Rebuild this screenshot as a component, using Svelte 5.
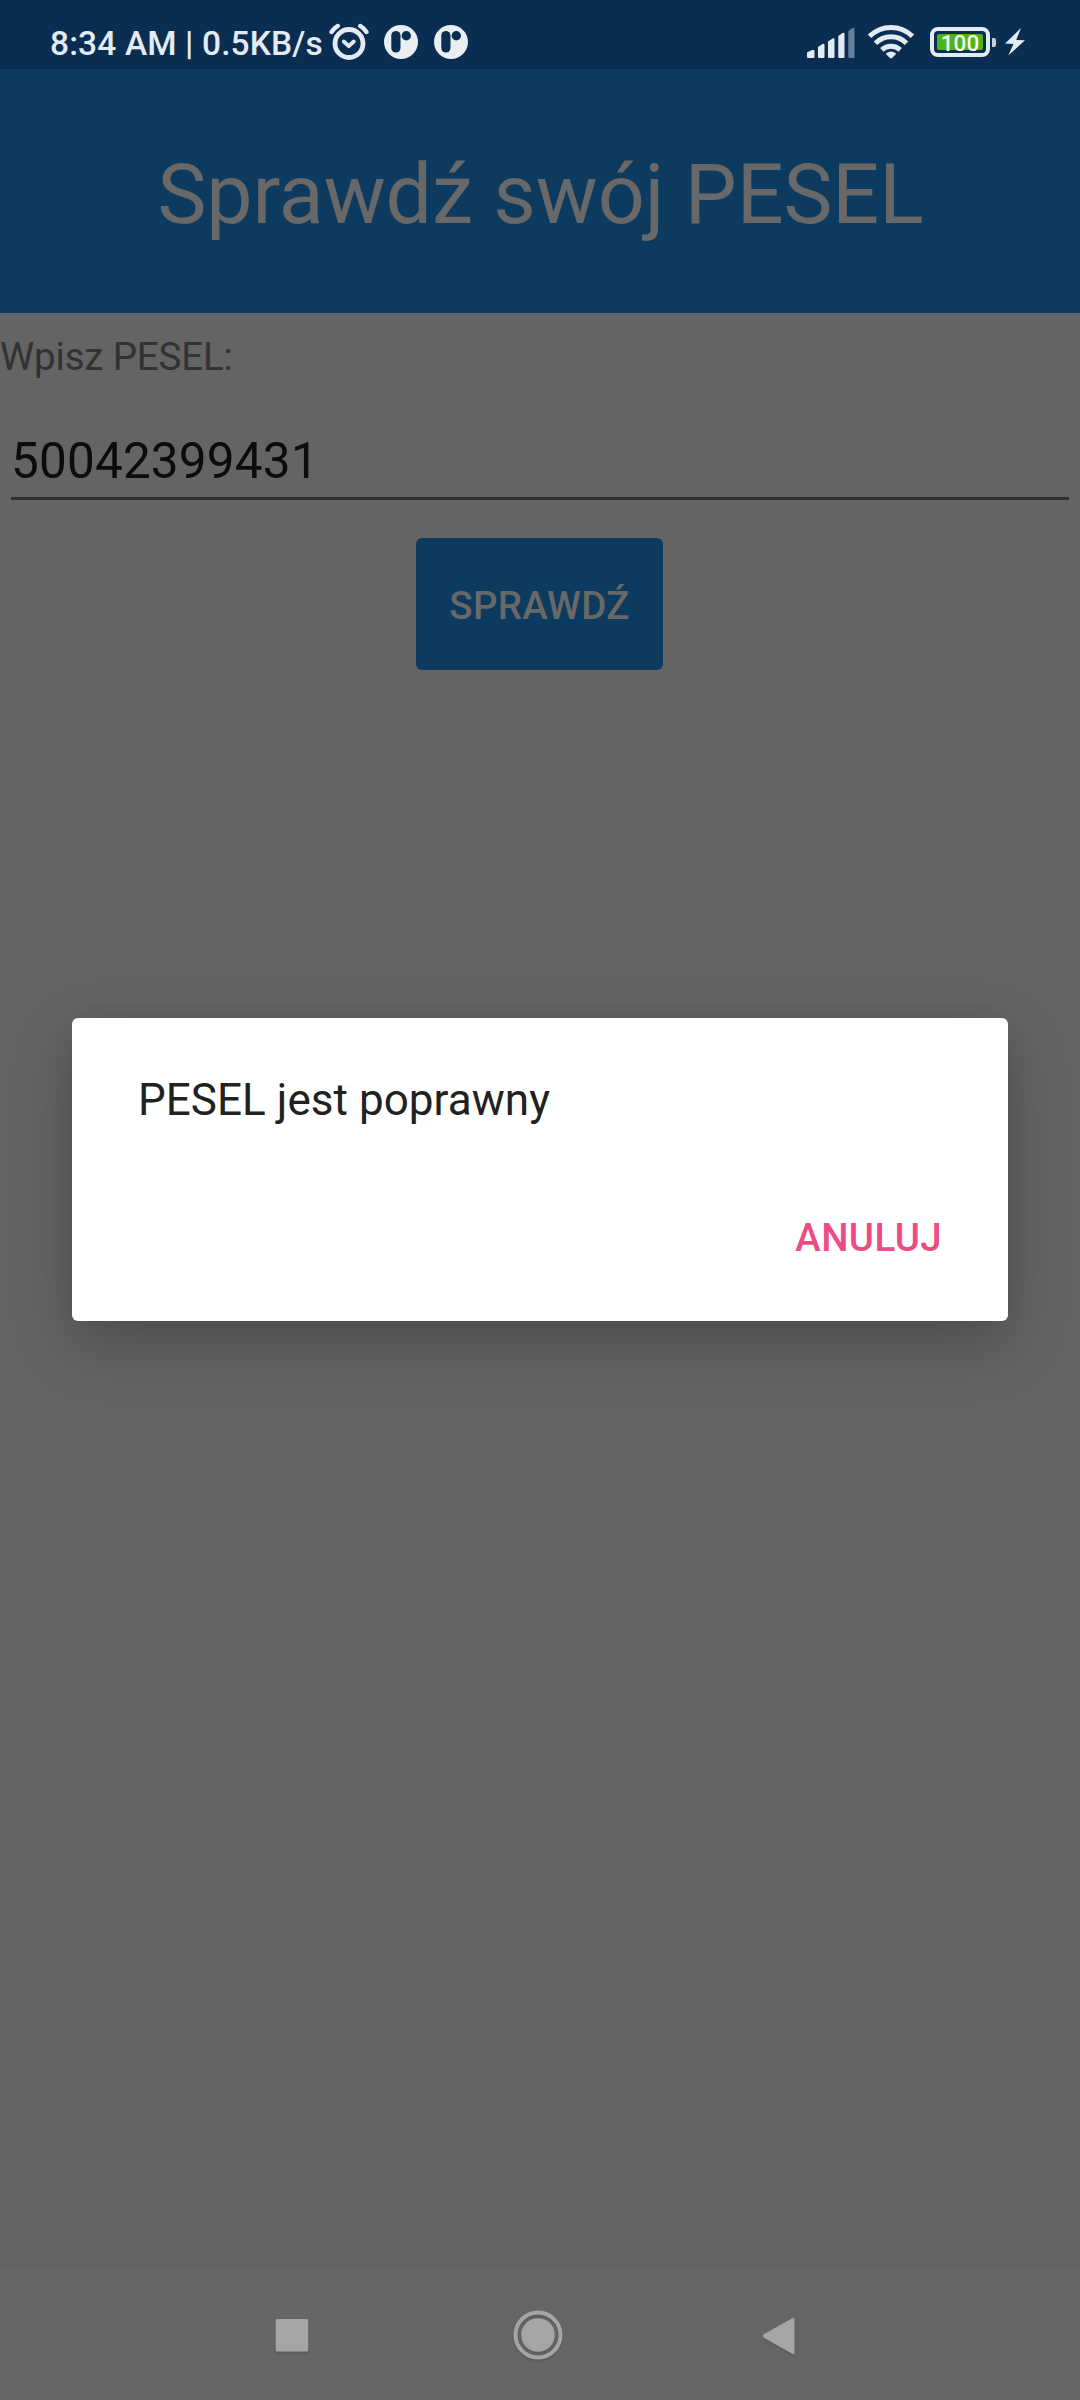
<script>
  let pesel = $state('50042399431');
  let open = $state(true);
</script>

<div class="screen">
  <header class="status">
    <span class="clock">8:34 AM | 0.5KB/s</span>
    <svg class="alarm" width="40" height="40" viewBox="0 0 40 40" fill="none" stroke="#e4ebf3" stroke-linecap="round" stroke-linejoin="round">
      <circle cx="20" cy="21.5" r="14" stroke-width="4.8" />
      <path d="M14.8 19.5l5 4.700 5-4.700" stroke-width="3.800" />
      <path d="M2.500 10Q5 6.200 8.800 3.900M37.500 10Q35 6.200 31.200 3.900" stroke-width="4.300" />
    </svg>
    {#each [0, 1] as n (n)}
      <svg class="app" width="34" height="34" viewBox="0 0 34 34">
        <circle cx="17" cy="17" r="17" fill="#e9eef3" />
        <rect x="7.300" y="6" width="9.200" height="21.5" rx="4.600" fill="#0a2d52" />
        <circle cx="22.300" cy="10.800" r="4.700" fill="#0a2d52" />
      </svg>
    {/each}
    <svg class="signal" width="48" height="32" viewBox="0 0 48 32" fill="#e4ebf3">
      <path d="M0 26.500 5 24h1.500q1 0 1 1v6q0 1-1 1H1q-1 0-1-1z" />
      <path d="M11 21l4.500-3q2-.8 2 1v12q0 1-1 1H12q-1 0-1-1z" />
      <path d="M21 15.500l4.500-3q2-.8 2 1V31q0 1-1 1H22q-1 0-1-1z" />
      <path d="M31.300 10l4.200-3q2-.8 2 1v23q0 1-1 1h-4.200q-1 0-1-1z" />
      <path d="M41.300 5l4.200-3q2-.8 2 1v28q0 1-1 1h-4.200q-1 0-1-1z" fill="#667f9a" />
    </svg>
    <svg class="wifi" width="48" height="36" viewBox="0 0 48 36" fill="none" stroke="#e4ebf3" stroke-width="5">
      <path d="M2.500 12.300a30.500 30.500 0 0 1 43 0" />
      <path d="M8.500 19.200a22 22 0 0 1 31 0" />
      <path d="M14.800 25.900a13.600 13.600 0 0 1 18.400 0" />
      <path d="M23 34l-3.600-3.400q-.8-.8.200-1.500 4.400-3 8.800 0 1 .7.200 1.500L25 34q-1 .9-2 0z" fill="#e4ebf3" stroke="none" />
    </svg>
    <div class="battery"><span class="level">100</span></div>
    <span class="nub"></span>
    <svg class="bolt" width="20" height="28" viewBox="0 0 20 28" fill="#e4ebf3">
      <path d="M16 0 0 15.500l8.500.5L3.300 27.600 20 12.200l-8.800-.3z" />
    </svg>
  </header>

  <h1>Sprawdź swój PESEL</h1>

  <main>
    <label for="pesel">Wpisz PESEL:</label>
    <input id="pesel" bind:value={pesel} />
    <button class="check" onclick={() => (open = true)}>SPRAWDŹ</button>
  </main>

  <nav>
    <svg width="36" height="36" viewBox="0 0 36 36"><rect x="1.700" y="1" width="32.500" height="32.500" rx="1.500" /></svg>
    <svg class="home" width="50" height="50" viewBox="0 0 50 50">
      <circle cx="25" cy="25" r="22.500" fill="none" stroke="#a5a5a5" stroke-width="4" />
      <circle cx="25" cy="25" r="16.800" />
    </svg>
    <svg width="34" height="40" viewBox="0 0 34 40"><path d="M1.400 18.600Q0 20 1.400 21.400L30.500 38q2 1 2-1V3q0-2-2-1z" /></svg>
  </nav>

  {#if open}
    <div class="dialog" role="dialog">
      <p>PESEL jest poprawny</p>
      <button class="cancel" onclick={() => (open = false)}>ANULUJ</button>
    </div>
  {/if}
</div>

<style>
  :global(body) {
    margin: 0;
    background: #646464;
  }
  .screen {
    position: relative;
    display: flex;
    flex-direction: column;
    width: 1080px;
    height: 2400px;
    background: #646464;
    font-family: Roboto, sans-serif;
    overflow: hidden;
  }
  .screen * {
    box-sizing: border-box;
  }
  svg {
    display: block;
    flex: none;
  }
  .status {
    display: flex;
    align-items: center;
    height: 69px;
    padding: 15px 55px 0 50px;
    background: #0a2d52;
  }
  .clock {
    width: 279px;
    margin-top: 4px;
    color: #e4ebf3;
    font-size: 33.500px;
    font-weight: 500;
    letter-spacing: 0.120px;
    line-height: 56px;
    white-space: nowrap;
  }
  .alarm {
    margin-right: 15px;
  }
  .app {
    margin-right: 16px;
  }
  .signal {
    margin: 0 12px 0 auto;
  }
  .wifi {
    margin-right: 15px;
  }
  .battery {
    display: flex;
    width: 60px;
    height: 30px;
    padding: 3px;
    border: 4px solid #e4ebf3;
    border-radius: 8px;
  }
  .level {
    flex: 1;
    border-radius: 2px;
    background: #4fb31c;
    color: #f4faf0;
    font-size: 22.500px;
    font-weight: 500;
    line-height: 19px;
    text-align: center;
  }
  .nub {
    width: 4px;
    height: 9px;
    margin: 0 9px 0 2px;
    border-radius: 0 2px 2px 0;
    background: #c5d0dc;
  }
  h1 {
    height: 244px;
    margin: 0;
    padding: 7px 0 0 1px;
    background: #0d3b5f;
    color: #686868;
    font-size: 82.5px;
    font-weight: 400;
    letter-spacing: -0.080px;
    line-height: 237px;
    text-align: center;
    white-space: nowrap;
  }
  main {
    display: flex;
    flex: 1;
    flex-direction: column;
    align-items: center;
    padding: 21px 11px 0;
  }
  label {
    align-self: flex-start;
    margin-left: -11px;
    color: #323232;
    font-size: 38.5px;
    letter-spacing: -0.160px;
    line-height: 46px;
  }
  input {
    width: 100%;
    height: 70px;
    margin: 50px 0 38px;
    padding: 0 0 5px;
    border: 0;
    border-bottom: 3px solid #303030;
    outline: 0;
    background: transparent;
    color: #0c0c0c;
    font: 49.500px/58px Roboto, sans-serif;
    letter-spacing: 0.150px;
  }
  .check {
    width: 247px;
    height: 132px;
    margin-right: 1px;
    padding: 4px 0 0;
    border: 0;
    border-radius: 6px;
    background: #0d3b5f;
    color: #686868;
    font: 500 38.500px/46px Roboto, sans-serif;
    letter-spacing: 0.300px;
  }
  nav {
    display: flex;
    align-items: center;
    height: 131px;
    padding: 2px 284px 0 274px;
    justify-content: space-between;
    background: #666666;
    fill: #a5a5a5;
  }
  nav svg {
    filter: drop-shadow(0 2px 1px rgba(0, 0, 0, 0.12));
  }
  .home {
    margin: 0 0 1px 3px;
  }
  .dialog {
    position: absolute;
    top: 1018px;
    left: 72px;
    display: flex;
    flex-direction: column;
    width: 936px;
    height: 303px;
    padding: 56px 66px;
    border-radius: 6px;
    background: #fff;
    box-shadow: 0 22px 66px rgba(0, 0, 0, 0.24), 0 0 24px rgba(0, 0, 0, 0.04);
  }
  .dialog p {
    margin: 0;
    color: #212121;
    font-size: 44px;
    letter-spacing: 0.050px;
    line-height: 52px;
  }
  .cancel {
    align-self: flex-end;
    margin-top: 89px;
    padding: 0;
    border: 0;
    background: none;
    color: #ed4b84;
    font: 500 38.500px/46px Roboto, sans-serif;
    letter-spacing: 0.350px;
  }
</style>
